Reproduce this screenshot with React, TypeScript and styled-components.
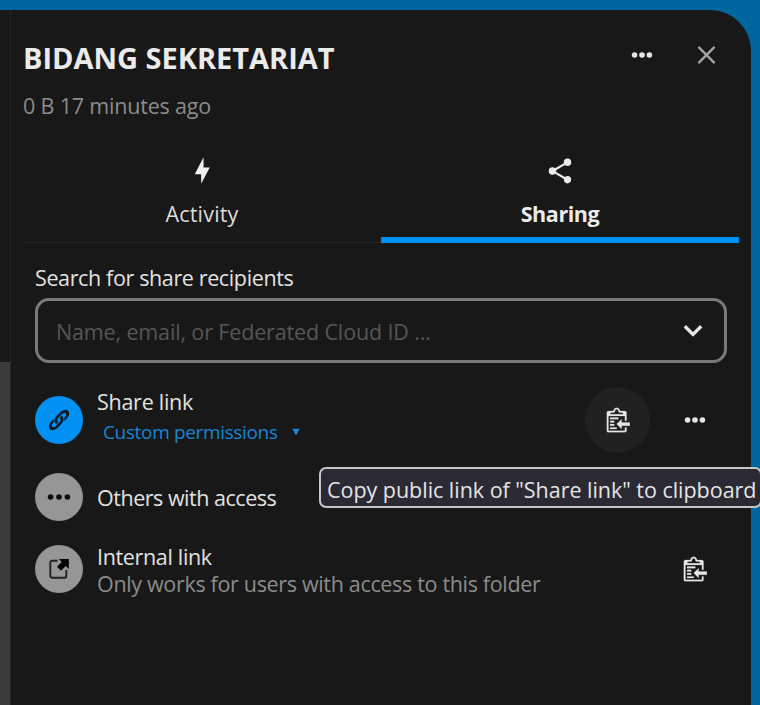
import React from 'react';
import styled, { createGlobalStyle } from 'styled-components';

const Global = createGlobalStyle`
  * { box-sizing: border-box; }
  body { margin: 0; overflow: hidden; background: #00679e; }
`;

const Page = styled.div`
  width: 760px;
  height: 705px;
  padding: 10px 9px 0 0;
  background: #00679e;
  font-family: 'Open Sans', 'Noto Sans', sans-serif;
  font-size: 21.5px;
  color: #e2e2e2;
  overflow: hidden;
`;

const Content = styled.div`
  display: flex;
  height: 695px;
  background: #181818;
  border-top-right-radius: 41px;
  overflow: hidden;
`;

const FileList = styled.div`
  width: 10px;
  padding-top: 352px;
`;

const ListFill = styled.div`
  height: 100%;
  background: #3b3b3b;
`;

const Sidebar = styled.aside`
  flex: 1;
  min-width: 0;
  border-left: 1px solid #262626;
  padding: 0 12px;
`;

const Label = styled.span<{ $spacing?: number }>`
  display: block;
  white-space: nowrap;
  letter-spacing: ${(p) => p.$spacing ?? 0}px;
`;

const Header = styled.header`
  height: 128px;
  padding-top: 19px;
`;

const TitleRow = styled.div`
  display: flex;
  align-items: center;
  height: 52px;
`;

const Title = styled.h1`
  margin: 5px auto 0 0;
  font-size: 29px;
  line-height: 40px;
  font-weight: 700;
  letter-spacing: -0.02px;
  color: #ebebeb;
  white-space: nowrap;
`;

const IconButton = styled.button<{ $active?: boolean }>`
  display: grid;
  place-items: center;
  flex: none;
  width: 65px;
  height: 66px;
  padding: 0;
  border: 0;
  border-radius: 50%;
  color: #e6e6e6;
  background: ${(p) => (p.$active ? '#212121' : 'transparent')};
`;

const Subtitle = styled(Label)`
  margin-top: 10px;
  line-height: 30px;
  color: #8c8c8c;
`;

const Tabs = styled.nav`
  display: flex;
  height: 105px;
  width: 716px;
`;

const Tab = styled.div<{ $active?: boolean }>`
  flex: 1;
  display: flex;
  flex-direction: column;
  align-items: center;
  padding-top: 15px;
  line-height: 30px;
  font-weight: ${(p) => (p.$active ? 700 : 400)};
  color: ${(p) => (p.$active ? '#ebebeb' : '#dcdcdc')};
  border-bottom: ${(p) => (p.$active ? '6px solid #0091f2' : '1px solid #262626')};

  svg { height: 30px; margin: 3px 0 12.5px; }
`;

const SharingPanel = styled.section`
  padding: 20px 12px 0;
`;

const SearchLabel = styled.label`
  display: block;
  line-height: 30px;
  letter-spacing: -0.37px;
  white-space: nowrap;
`;

const SearchField = styled.div`
  display: flex;
  align-items: center;
  justify-content: space-between;
  width: 692px;
  height: 65px;
  margin-top: 5px;
  padding: 0 20px 0 18px;
  border: 3px solid #797979;
  border-radius: 14px;
`;

const Placeholder = styled(Label)`
  padding-top: 1px;
  color: #565656;
`;

const ShareEntries = styled.div`
  width: 692px;
  padding-top: 19px;
`;

const Entry = styled.div<{ $height: number }>`
  display: flex;
  align-items: center;
  height: ${(p) => p.$height}px;
`;

const Avatar = styled.div<{ $primary?: boolean }>`
  display: grid;
  place-items: center;
  flex: none;
  width: 48px;
  height: 48px;
  margin-right: 14px;
  border-radius: 50%;
  background: ${(p) => (p.$primary ? '#0091f2' : '#969696')};
  color: ${(p) => (p.$primary ? '#0b1a28' : '#0d0d0d')};
`;

const Details = styled.div<{ $rise?: number; $drop?: number }>`
  flex: 1;
  min-width: 0;
  padding-top: ${(p) => p.$drop ?? 0}px;
  padding-bottom: ${(p) => p.$rise ?? 0}px;
`;

const EntryTitle = styled(Label)`
  line-height: 30px;
`;

const EntryNote = styled(Label)`
  margin-top: -3px;
  line-height: 30px;
  color: #8c8c8c;
`;

const Permissions = styled.div`
  display: flex;
  align-items: center;
  gap: 14px;
  height: 31px;
  padding-left: 6px;
  font-size: 19px;
  color: #1685d6;
`;

const Actions = styled.div`
  display: flex;
  gap: 12px;
`;

const Tooltip = styled.div`
  position: absolute;
  left: 319px;
  top: 467px;
  width: 443px;
  height: 41px;
  padding-left: 6px;
  border: 2px solid #c6c6ca;
  border-radius: 7px;
  background: #2b2a33;
  color: #e4e4e6;
  line-height: 41px;
  letter-spacing: -0.03px;
  white-space: nowrap;
`;

const Dots = ({ gap = 7.4 }: { gap?: number }) => (
  <svg width="24" height="8" viewBox="-12 -4 24 8" fill="currentColor">
    <circle cx={-gap} r="2.8" />
    <circle r="2.8" />
    <circle cx={gap} r="2.8" />
  </svg>
);

const CloseIcon = () => (
  <svg width="20" height="20" viewBox="0 0 20 20" fill="none" stroke="#a3a3a3" strokeWidth="2.4">
    <path d="M1.4 1.9L17.6 18.1M17.6 1.9L1.4 18.1" />
  </svg>
);

const BoltIcon = () => (
  <svg width="30" height="30" viewBox="0 0 25.2 25.2" fill="#f0f0f0">
    <path d="M11.9 15.4H6.5L13.9 1V9.6H19.1L11.9 23.3Z" />
  </svg>
);

const ShareIcon = () => (
  <svg width="30" height="30" viewBox="0 0 24 24" fill="#ebebeb">
    <path d="M18,16.08C17.24,16.08 16.56,16.38 16.04,16.85L8.91,12.7C8.96,12.47 9,12.24 9,12C9,11.76 8.96,11.53 8.91,11.3L15.96,7.19C16.5,7.69 17.21,8 18,8A3,3 0 0,0 21,5A3,3 0 0,0 18,2A3,3 0 0,0 15,5C15,5.24 15.04,5.47 15.09,5.7L8.04,9.81C7.5,9.31 6.79,9 6,9A3,3 0 0,0 3,12A3,3 0 0,0 6,15C6.79,15 7.5,14.69 8.04,14.19L15.16,18.34C15.11,18.55 15.08,18.77 15.08,19C15.08,20.61 16.39,21.91 18,21.91C19.61,21.91 20.92,20.61 20.92,19A2.92,2.92 0 0,0 18,16.08Z" />
  </svg>
);

const ChevronIcon = () => (
  <svg width="22" height="16" viewBox="0 0 22 16" fill="none" stroke="#e6e6e6" strokeWidth="3.4">
    <path d="M2.8 3.2L11 11.4L19.2 3.2" />
  </svg>
);

const LinkIcon = () => (
  <svg width="24" height="24" viewBox="0 0 24 24" fill="currentColor" stroke="currentColor" strokeWidth="1.1">
    <path
      transform="translate(12 12) rotate(-45) scale(1.12 .8) rotate(45) translate(-12 -12)"
      d="M10.59,13.41C11,13.8 11,14.44 10.59,14.83C10.2,15.22 9.56,15.22 9.17,14.83C7.22,12.88 7.22,9.71 9.17,7.76V7.76L12.71,4.22C14.66,2.27 17.83,2.27 19.78,4.22C21.73,6.17 21.73,9.34 19.78,11.29L18.29,12.78C18.3,11.96 18.17,11.14 17.89,10.36L18.36,9.88C19.54,8.71 19.54,6.81 18.36,5.64C17.19,4.46 15.29,4.46 14.12,5.64L10.59,9.17C9.41,10.34 9.41,12.24 10.59,13.41M13.41,9.17C13.8,8.78 14.44,8.78 14.83,9.17C16.78,11.12 16.78,14.29 14.83,16.24V16.24L11.29,19.78C9.34,21.73 6.17,21.73 4.22,19.78C2.27,17.83 2.27,14.66 4.22,12.71L5.71,11.22C5.7,12.04 5.83,12.86 6.11,13.65L5.64,14.12C4.46,15.29 4.46,17.19 5.64,18.36C6.81,19.54 8.71,19.54 9.88,18.36L13.41,14.83C14.59,13.66 14.59,11.76 13.41,10.59C13,10.2 13,9.56 13.41,9.17Z"
    />
  </svg>
);

const ClippyIcon = () => (
  <svg width="25" height="28" viewBox="-1.1 0 15.2 17" fill="currentColor" stroke="currentColor" strokeWidth="0.12">
    <path d="M2 13h4v1H2v-1zm5-6H2v1h5V7zm2 3V8l-3 3 3 3v-2h5v-2H9zM4.5 9H2v1h2.5V9zM2 12h2.5v-1H2v1zm9 1h1v2c-.02.28-.11.52-.3.7-.19.18-.42.28-.7.3H1c-.55 0-1-.45-1-1V4c0-.55.45-1 1-1h3c0-1.11.89-2 2-2 1.11 0 2 .89 2 2h3c.55 0 1 .45 1 1v5h-1V6H1v9h10v-2zM2 5h8c0-.55-.45-1-1-1H8c-.55 0-1-.45-1-1s-.45-1-1-1-1 .45-1 1-.45 1-1 1H3c-.55 0-1 .45-1 1z" />
  </svg>
);

const ExternalIcon = () => (
  <svg width="22" height="22" viewBox="0 0 22 22">
    <path d="M9.5 2.8H4A1.7 1.7 0 0 0 2.3 4.5V18A1.7 1.7 0 0 0 4 19.7H16.6A1.7 1.7 0 0 0 18.3 18V12" fill="none" stroke="#202020" strokeWidth="1.9" />
    <path d="M10.8 1H20.8V11L17.8 8L13 12.8L9 8.8L13.8 4Z" fill="#050505" />
  </svg>
);

const CaretIcon = () => (
  <svg width="8" height="8" viewBox="0 0 8 8" fill="currentColor">
    <path d="M.3 .7H7.7L4 7.5Z" />
  </svg>
);

export default function App() {
  return (
    <Page>
      <Global />
      <Content>
        <FileList><ListFill /></FileList>
        <Sidebar>
          <Header>
            <TitleRow>
              <Title>BIDANG SEKRETARIAT</Title>
              <IconButton aria-label="Actions"><Dots /></IconButton>
              <IconButton aria-label="Close"><CloseIcon /></IconButton>
            </TitleRow>
            <Subtitle $spacing={-0.18}>0 B 17 minutes ago</Subtitle>
          </Header>
          <Tabs>
            <Tab><BoltIcon /><Label $spacing={0.2}>Activity</Label></Tab>
            <Tab $active><ShareIcon /><Label $spacing={-0.42}>Sharing</Label></Tab>
          </Tabs>
          <SharingPanel>
            <SearchLabel>Search for share recipients</SearchLabel>
            <SearchField>
              <Placeholder $spacing={-0.14}>Name, email, or Federated Cloud ID ...</Placeholder>
              <ChevronIcon />
            </SearchField>
            <ShareEntries>
              <Entry $height={76}>
                <Avatar $primary><LinkIcon /></Avatar>
                <Details $rise={6}>
                  <EntryTitle $spacing={-0.27}>Share link</EntryTitle>
                  <Permissions><Label $spacing={-0.35}>Custom permissions</Label><CaretIcon /></Permissions>
                </Details>
                <Actions>
                  <IconButton $active aria-label="Copy public link"><ClippyIcon /></IconButton>
                  <IconButton aria-label="Link actions"><Dots /></IconButton>
                </Actions>
              </Entry>
              <Entry $height={78}>
                <Avatar><Dots gap={8.4} /></Avatar>
                <Details $drop={2}><EntryTitle $spacing={-0.48}>Others with access</EntryTitle></Details>
              </Entry>
              <Entry $height={66}>
                <Avatar><ExternalIcon /></Avatar>
                <Details $drop={2}>
                  <EntryTitle $spacing={-0.34}>Internal link</EntryTitle>
                  <EntryNote $spacing={-0.33}>Only works for users with access to this folder</EntryNote>
                </Details>
                <IconButton aria-label="Copy internal link"><ClippyIcon /></IconButton>
              </Entry>
            </ShareEntries>
          </SharingPanel>
        </Sidebar>
      </Content>
      <Tooltip role="tooltip">Copy public link of "Share link" to clipboard</Tooltip>
    </Page>
  );
}
